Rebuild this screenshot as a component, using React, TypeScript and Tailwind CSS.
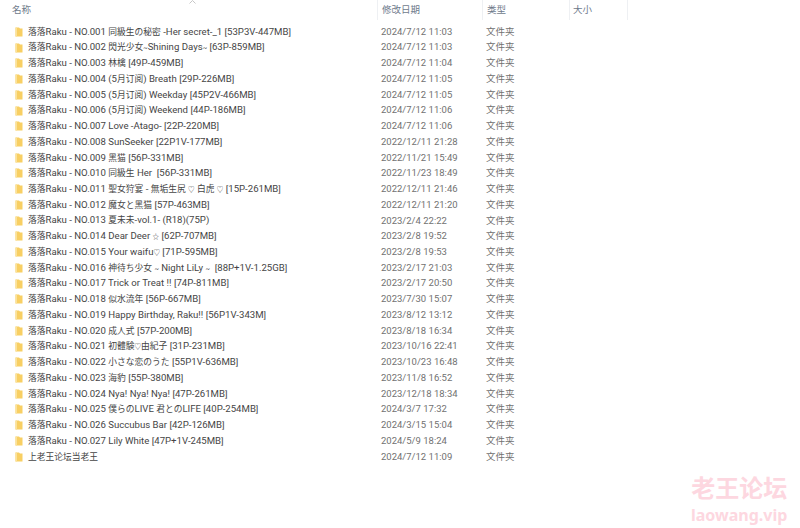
const rows: [string, string][] = [
  ["落落Raku - NO.001 同級生の秘密 -Her secret-_1 [53P3V-447MB]", "2024/7/12 11:03"],
  ["落落Raku - NO.002 閃光少女~Shining Days~ [63P-859MB]", "2024/7/12 11:03"],
  ["落落Raku - NO.003 林檎 [49P-459MB]", "2024/7/12 11:04"],
  ["落落Raku - NO.004 (5月订阅) Breath [29P-226MB]", "2024/7/12 11:05"],
  ["落落Raku - NO.005 (5月订阅) Weekday [45P2V-466MB]", "2024/7/12 11:05"],
  ["落落Raku - NO.006 (5月订阅) Weekend [44P-186MB]", "2024/7/12 11:06"],
  ["落落Raku - NO.007 Love -Atago- [22P-220MB]", "2024/7/12 11:06"],
  ["落落Raku - NO.008 SunSeeker [22P1V-177MB]", "2022/12/11 21:28"],
  ["落落Raku - NO.009 黑猫 [56P-331MB]", "2022/11/21 15:49"],
  ["落落Raku - NO.010 同級生 Her  [56P-331MB]", "2022/11/23 18:49"],
  ["落落Raku - NO.011 聖女狩宴 - 無垢生尻 ♡ 白虎 ♡ [15P-261MB]", "2022/12/11 21:46"],
  ["落落Raku - NO.012 魔女と黑猫 [57P-463MB]", "2022/12/11 21:20"],
  ["落落Raku - NO.013 夏未未-vol.1- (R18)(75P)", "2023/2/4 22:22"],
  ["落落Raku - NO.014 Dear Deer ☆ [62P-707MB]", "2023/2/8 19:52"],
  ["落落Raku - NO.015 Your waifu♡ [71P-595MB]", "2023/2/8 19:53"],
  ["落落Raku - NO.016 神待ち少女 ~ Night LiLy ~  [88P+1V-1.25GB]", "2023/2/17 21:03"],
  ["落落Raku - NO.017 Trick or Treat !! [74P-811MB]", "2023/2/17 20:50"],
  ["落落Raku - NO.018 似水流年 [56P-667MB]", "2023/7/30 15:07"],
  ["落落Raku - NO.019 Happy Birthday, Raku!! [56P1V-343M]", "2023/8/12 13:12"],
  ["落落Raku - NO.020 成人式 [57P-200MB]", "2023/8/18 16:34"],
  ["落落Raku - NO.021 初體験♡由紀子 [31P-231MB]", "2023/10/16 22:41"],
  ["落落Raku - NO.022 小さな恋のうた [55P1V-636MB]", "2023/10/23 16:48"],
  ["落落Raku - NO.023 海豹 [55P-380MB]", "2023/11/8 16:52"],
  ["落落Raku - NO.024 Nya! Nya! Nya! [47P-261MB]", "2023/12/18 18:34"],
  ["落落Raku - NO.025 僕らのLIVE 君とのLIFE [40P-254MB]", "2024/3/7 17:32"],
  ["落落Raku - NO.026 Succubus Bar [42P-126MB]", "2024/3/15 15:04"],
  ["落落Raku - NO.027 Lily White [47P+1V-245MB]", "2024/5/9 18:24"],
  ["上老王论坛当老王", "2024/7/12 11:09"],
];

const FolderIcon = () => (
  <svg width="8" height="10" viewBox="0 0 8 10" className="shrink-0">
    <path d="M0.5 0.5h3.5l1 1h2.5v8h-7z" fill="#f8cf63" />
    <path d="M0.5 0.5h1.5v9h-1.5z" fill="#fbe29a" />
  </svg>
);

// the CJK glyphs and the little hearts are narrower than the latin size would give
const Name = ({ text }: { text: string }) => (
  <span className="whitespace-pre text-[9.6px]">
    {text.split(/([♡☆~]|[\u3040-\u30ff\u4e00-\u9fff]+)/).map((part, i) =>
      /^[♡☆~]/.test(part) ? (
        <span key={i} className="text-[6.5px]">{part}</span>
      ) : i % 2 ? (
        <span key={i} className="text-[8.75px]">{part}</span>
      ) : (
        part
      ),
    )}
  </span>
);

export default function App() {
  return (
    <div className="relative w-[800px] h-[528px] overflow-hidden bg-white font-['Roboto','Noto_Sans_CJK_JP',sans-serif] text-[9.5px]">
      <div className="absolute left-[189px] top-[0px]">
        <svg width="7" height="4" viewBox="0 0 7 4">
          <path d="M0.5 3.5l3-3 3 3" fill="none" stroke="#b9b9b9" strokeWidth="0.8" />
        </svg>
      </div>
      <div className="flex h-[20px] text-[#6f7b8c]">
        <div className="w-[377px] pl-[12px] leading-[19px]">名称</div>
        <div className="w-[105px] pl-[4px] leading-[19px] border-l border-[#eef0f3]">修改日期</div>
        <div className="w-[87px] pl-[4px] leading-[19px] border-l border-[#eef0f3]">类型</div>
        <div className="w-[59px] pl-[3px] leading-[19px] border-x border-[#eef0f3]">大小</div>
      </div>
      <div className="pt-[4px]">
        {rows.map(([name, date]) => (
          <div key={name} className="flex items-center h-[15.74px] text-[#454545]">
            <div className="flex items-center w-[377px] pl-[15px] gap-[5px]">
              <FolderIcon />
              <Name text={name} />
            </div>
            <div className="w-[105px] pl-[4px] text-[#717171]">{date}</div>
            <div className="pl-[4px] text-[#717171]">文件夹</div>
          </div>
        ))}
      </div>
      <div className="absolute left-[691px] top-[476px] flex flex-col items-center font-['Liberation_Sans','Noto_Sans_CJK_SC',sans-serif] font-bold text-[#fdd7e0]">
        <span className="text-[24px] leading-[26px]">老王论坛</span>
        <span className="text-[16px] leading-[20px] mt-[3px] font-['Noto_Sans',sans-serif]">laowang.vip</span>
      </div>
    </div>
  );
}
